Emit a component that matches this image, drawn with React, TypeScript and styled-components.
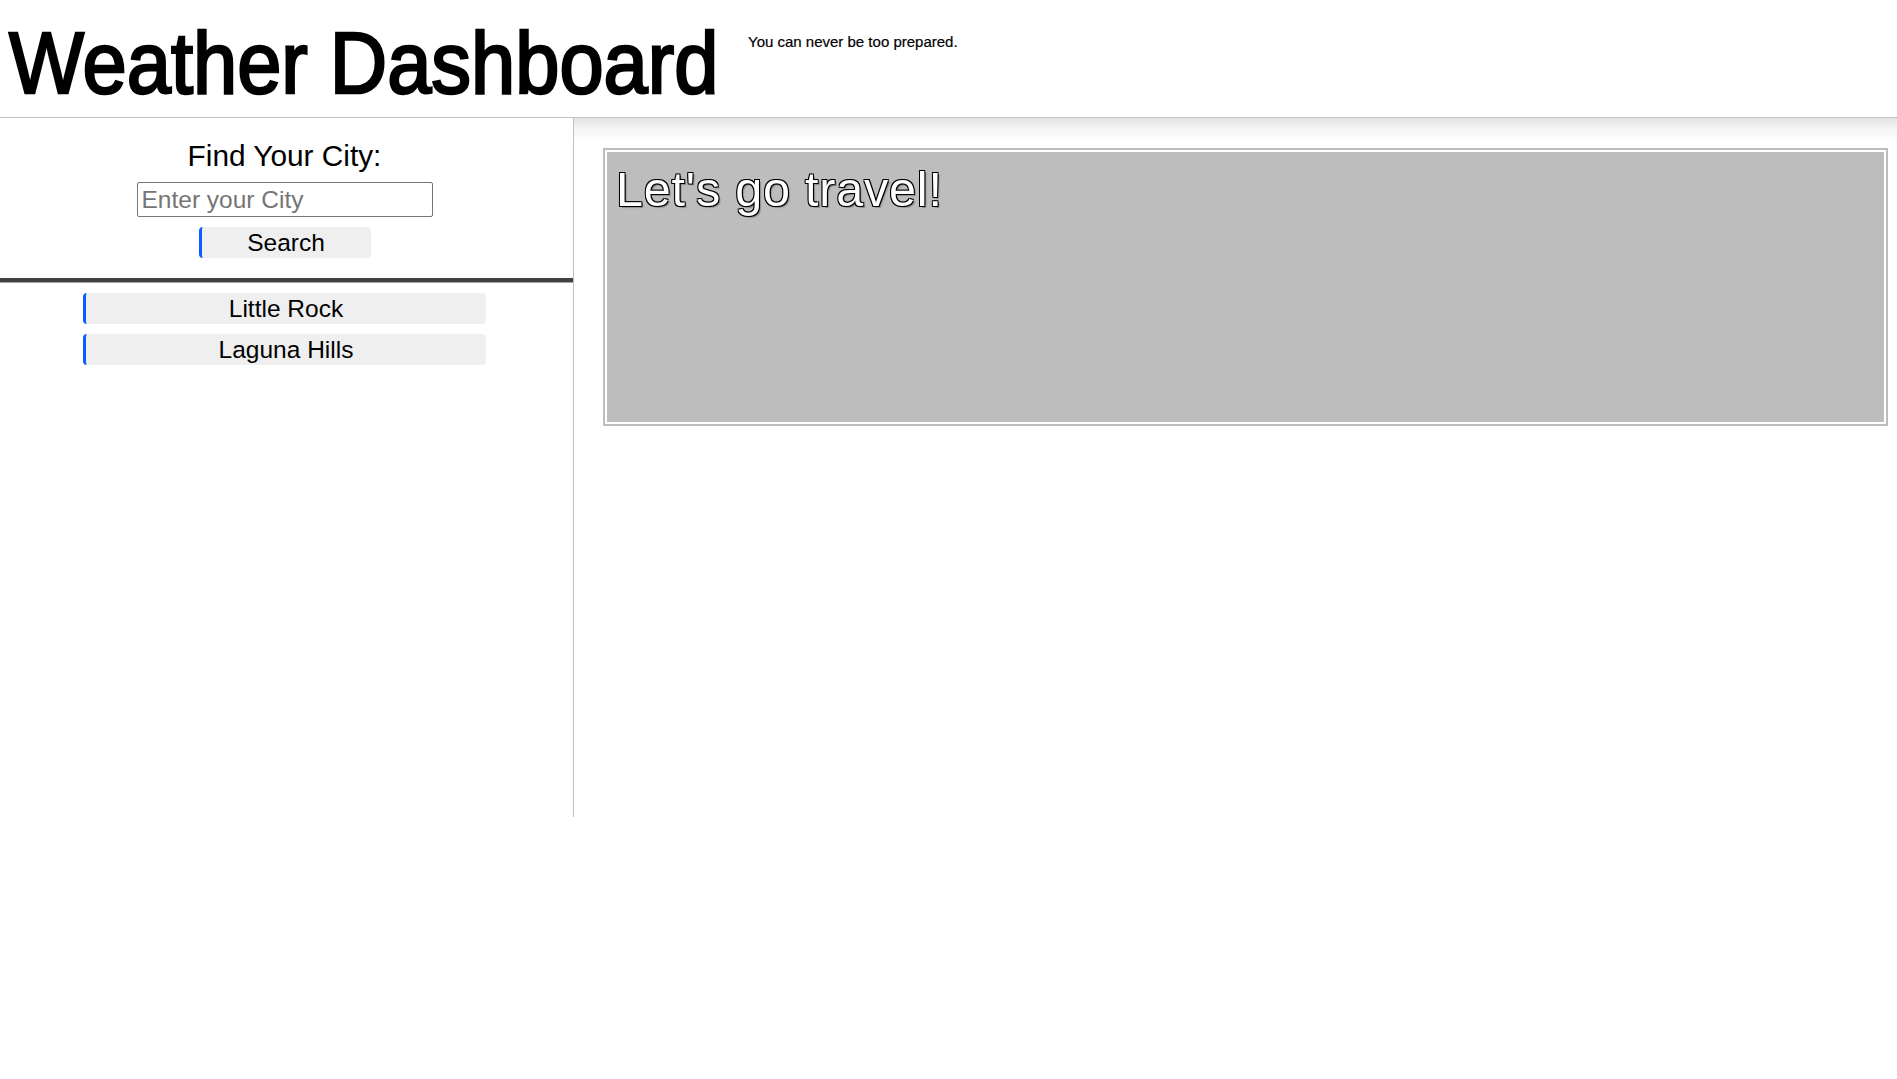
import React from "react";
import styled, { createGlobalStyle } from "styled-components";

const GlobalStyle = createGlobalStyle`
  html, body {
    margin: 0;
    padding: 0;
    background: #ffffff;
    font-family: "Liberation Sans", Arial, sans-serif;
    color: #000;
  }
  * { box-sizing: border-box; }
`;

const Header = styled.header`
  display: flex;
  align-items: flex-start;
  gap: 32px;
  padding: 19px 0 11px 9px;
  border-bottom: 1px solid #c4c4c4;
`;

const Title = styled.h1`
  margin: 0 -81px 0 0;
  width: 788px;
  font-family: "Liberation Sans", Arial, sans-serif;
  font-weight: 400;
  font-size: 87px;
  line-height: 87px;
  letter-spacing: 0;
  -webkit-text-stroke: 2.6px #000;
  white-space: nowrap;
  transform: scaleX(0.913);
  transform-origin: left center;
`;

const Tagline = styled.p`
  margin: 15px 0 0 0;
  font-size: 15px;
  line-height: 16px;
  white-space: nowrap;
  -webkit-text-stroke: 0.2px #000;
`;

const Layout = styled.div`
  display: flex;
  align-items: stretch;
`;

const Sidebar = styled.aside`
  width: 574px;
  flex: none;
  height: 699px;
  border-right: 1px solid #c0c0c0;
  display: flex;
  flex-direction: column;
`;

const SearchForm = styled.form`
  display: flex;
  flex-direction: column;
  align-items: center;
  gap: 10px;
  padding: 21px 4px 20px 0;
  border-bottom: 4px solid #414141;
  box-shadow: 0 1px 0 #a8a8a8;
`;

const FormLabel = styled.h2`
  margin: 0;
  font-weight: 400;
  font-size: 29.8px;
  line-height: 33px;
`;

const CityInput = styled.input`
  width: 296px;
  height: 35px;
  padding: 0 4px;
  border: 1px solid #767676;
  border-radius: 2px;
  font-family: "Liberation Sans", Arial, sans-serif;
  font-size: 24.5px;
  color: #000;
  background: #fff;
  &::placeholder {
    color: #757575;
  }
`;

const ActionButton = styled.button<{ $width: number }>`
  width: ${(p) => p.$width}px;
  height: 31px;
  padding: 0;
  border: none;
  border-left: 3px solid #0a5eff;
  border-radius: 4px;
  background: #efefef;
  font-family: "Liberation Sans", Arial, sans-serif;
  font-size: 24.5px;
  line-height: 31px;
  color: #000;
  cursor: pointer;
`;

const HistoryList = styled.div`
  display: flex;
  flex-direction: column;
  align-items: center;
  gap: 10px;
  padding: 11px 4px 0 0;
`;

const Main = styled.main`
  flex: 1;
  background: linear-gradient(to bottom, #e2e2e2 0px, #f4f4f4 10px, #ffffff 24px);
  padding: 30px 9px 0 29px;
`;

const Card = styled.section`
  height: 278px;
  border: 2px solid #bdbdbd;
  background: #bdbdbd;
`;

const CardInner = styled.div`
  height: 100%;
  border: 2px solid #ffffff;
  background: #bdbdbd;
  padding: 10px 9px;
`;

const Greeting = styled.h3`
  margin: 0;
  font-weight: 400;
  font-size: 48.5px;
  line-height: 1.15;
  letter-spacing: 0.8px;
  color: #ffffff;
  text-shadow:
    -1px -1px 0 #000,
    1px -1px 0 #000,
    -1px 1px 0 #000,
    1px 1px 0 #000,
    2px 2px 1px #8a8a8a;
`;

export default function App() {
  const cities = ["Little Rock", "Laguna Hills"];
  return (
    <>
      <GlobalStyle />
      <Header>
        <Title>Weather Dashboard</Title>
        <Tagline>You can never be too prepared.</Tagline>
      </Header>
      <Layout>
        <Sidebar>
          <SearchForm onSubmit={(e) => e.preventDefault()}>
            <FormLabel>Find Your City:</FormLabel>
            <CityInput type="text" placeholder="Enter your City" />
            <ActionButton type="submit" $width={172}>
              Search
            </ActionButton>
          </SearchForm>
          <HistoryList>
            {cities.map((c) => (
              <ActionButton key={c} type="button" $width={403}>
                {c}
              </ActionButton>
            ))}
          </HistoryList>
        </Sidebar>
        <Main>
          <Card>
            <CardInner>
              <Greeting>Let's go travel!</Greeting>
            </CardInner>
          </Card>
        </Main>
      </Layout>
    </>
  );
}
